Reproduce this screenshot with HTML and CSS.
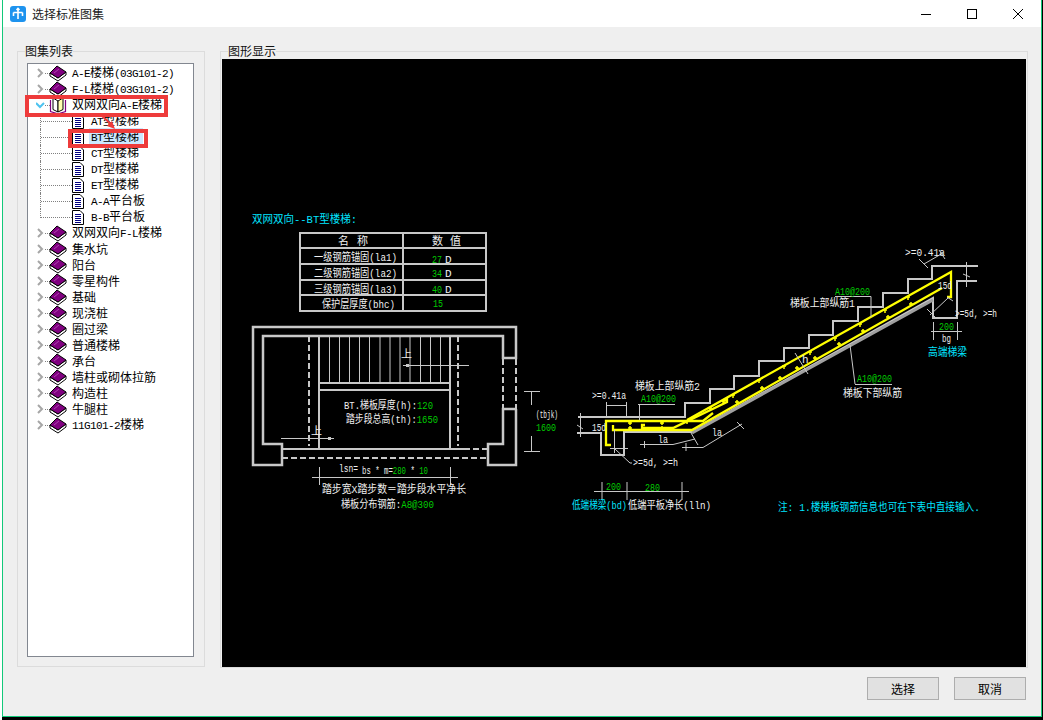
FILE: index.html
```html
<!DOCTYPE html>
<html lang="zh-CN">

<head>
    <meta charset="UTF-8">
    <meta name="viewport" content="width=device-width, initial-scale=1.0">
    <title>选择标准图集</title>
    <link rel="stylesheet" href="styles.css">
</head>

<body>
    <svg class="defs" width="0" height="0">
        <symbol id="book" viewBox="0 0 18 17">
            <path d="M1 8 L1 11 L9 16 L17 10 L17 7 L9 13 Z" fill="#fff" stroke="#000" stroke-width="1" />
            <path d="M1 8 L8 1 L17 7 L9 13 Z" fill="#800080" stroke="#000" stroke-width="1" />
            <path d="M5 8 L10 4" stroke="#b040b0" stroke-width="1" />
        </symbol>
        <symbol id="open-book" viewBox="0 0 18 17">
            <path d="M1.5 3 V14.5 L8 16.5 H10 L16.5 14.5 V3" fill="none" stroke="#800080" stroke-width="1.2" />
            <path d="M4 1 L9 4 V15 L4 12.5 Z" fill="#fff" stroke="#000" stroke-width="1" />
            <path d="M14 1 L9 4 V15 L14 12.5 Z" fill="#ffffb0" stroke="#000" stroke-width="1" />
        </symbol>
        <symbol id="doc" viewBox="0 0 12 15">
            <path d="M.5 .5 H8 L11.5 4 V14.5 H.5 Z" fill="#fff" stroke="#000" />
            <path d="M3 4.5 H9 M3 6.5 H9 M3 8.5 H9 M3 10.5 H9 M3 12.5 H9" stroke="#000080" />
        </symbol>
    </svg>

    <div class="window">
        <div class="titlebar">
            <svg class="app-icon" viewBox="0 0 16 16">
                <rect width="16" height="16" rx="3" fill="#1e93ee" />
                <path d="M8 2.5 V13 M3.5 6.5 H12.5 M3.5 6.5 V10 M12.5 6.5 V10 M6.5 4 L8 2.5 L9.5 4" fill="none" stroke="#fff" stroke-width="1.6" />
            </svg>
            <span class="title">选择标准图集</span>
            <div class="controls">
                <div class="control"><svg width="10" height="10" viewBox="0 0 10 10"><path d="M0 5.5 H10" stroke="#000" /></svg></div>
                <div class="control"><svg width="10" height="10" viewBox="0 0 10 10"><rect x=".5" y=".5" width="9" height="9" fill="none" stroke="#000" /></svg></div>
                <div class="control"><svg width="10" height="10" viewBox="0 0 10 10"><path d="M0 0 L10 10 M10 0 L0 10" stroke="#000" /></svg></div>
            </div>
        </div>

        <div class="panels">
            <fieldset class="group group-list">
                <legend>图集列表</legend>
                <div class="tree">
                    <div class="row"><svg class="chev"><path d="M2 1 L6 5 L2 9" /></svg><i class="dots"></i><svg class="icon"><use href="#book" /></svg><span><b>A-E</b>楼梯<b>(03G101-2)</b></span></div>
                    <div class="row"><svg class="chev"><path d="M2 1 L6 5 L2 9" /></svg><i class="dots"></i><svg class="icon"><use href="#book" /></svg><span><b>F-L</b>楼梯<b>(03G101-2)</b></span></div>
                    <div class="row"><svg class="chev open"><path d="M0 3 L4 7 L8 3" /></svg><i class="dots"></i><svg class="icon"><use href="#open-book" /></svg><span>双网双向<b>A-E</b>楼梯</span></div>
                    <div class="kids">
                        <div class="kid"><i class="tick"></i><svg class="doc"><use href="#doc" /></svg><span class="kid-label"><b>AT</b>型楼梯</span></div>
                        <div class="kid selected"><i class="tick"></i><svg class="doc"><use href="#doc" /></svg><span class="kid-label"><b>BT</b>型楼梯</span></div>
                        <div class="kid"><i class="tick"></i><svg class="doc"><use href="#doc" /></svg><span class="kid-label"><b>CT</b>型楼梯</span></div>
                        <div class="kid"><i class="tick"></i><svg class="doc"><use href="#doc" /></svg><span class="kid-label"><b>DT</b>型楼梯</span></div>
                        <div class="kid"><i class="tick"></i><svg class="doc"><use href="#doc" /></svg><span class="kid-label"><b>ET</b>型楼梯</span></div>
                        <div class="kid"><i class="tick"></i><svg class="doc"><use href="#doc" /></svg><span class="kid-label"><b>A-A</b>平台板</span></div>
                        <div class="kid"><i class="tick"></i><svg class="doc"><use href="#doc" /></svg><span class="kid-label"><b>B-B</b>平台板</span></div>
                    </div>
                    <div class="row"><svg class="chev"><path d="M2 1 L6 5 L2 9" /></svg><i class="dots"></i><svg class="icon"><use href="#book" /></svg><span>双网双向<b>F-L</b>楼梯</span></div>
                    <div class="row"><svg class="chev"><path d="M2 1 L6 5 L2 9" /></svg><i class="dots"></i><svg class="icon"><use href="#book" /></svg><span>集水坑</span></div>
                    <div class="row"><svg class="chev"><path d="M2 1 L6 5 L2 9" /></svg><i class="dots"></i><svg class="icon"><use href="#book" /></svg><span>阳台</span></div>
                    <div class="row"><svg class="chev"><path d="M2 1 L6 5 L2 9" /></svg><i class="dots"></i><svg class="icon"><use href="#book" /></svg><span>零星构件</span></div>
                    <div class="row"><svg class="chev"><path d="M2 1 L6 5 L2 9" /></svg><i class="dots"></i><svg class="icon"><use href="#book" /></svg><span>基础</span></div>
                    <div class="row"><svg class="chev"><path d="M2 1 L6 5 L2 9" /></svg><i class="dots"></i><svg class="icon"><use href="#book" /></svg><span>现浇桩</span></div>
                    <div class="row"><svg class="chev"><path d="M2 1 L6 5 L2 9" /></svg><i class="dots"></i><svg class="icon"><use href="#book" /></svg><span>圈过梁</span></div>
                    <div class="row"><svg class="chev"><path d="M2 1 L6 5 L2 9" /></svg><i class="dots"></i><svg class="icon"><use href="#book" /></svg><span>普通楼梯</span></div>
                    <div class="row"><svg class="chev"><path d="M2 1 L6 5 L2 9" /></svg><i class="dots"></i><svg class="icon"><use href="#book" /></svg><span>承台</span></div>
                    <div class="row"><svg class="chev"><path d="M2 1 L6 5 L2 9" /></svg><i class="dots"></i><svg class="icon"><use href="#book" /></svg><span>墙柱或砌体拉筋</span></div>
                    <div class="row"><svg class="chev"><path d="M2 1 L6 5 L2 9" /></svg><i class="dots"></i><svg class="icon"><use href="#book" /></svg><span>构造柱</span></div>
                    <div class="row"><svg class="chev"><path d="M2 1 L6 5 L2 9" /></svg><i class="dots"></i><svg class="icon"><use href="#book" /></svg><span>牛腿柱</span></div>
                    <div class="row"><svg class="chev"><path d="M2 1 L6 5 L2 9" /></svg><i class="dots"></i><svg class="icon"><use href="#book" /></svg><span><b>11G101-2</b>楼梯</span></div>
                </div>
            </fieldset>

            <fieldset class="group group-view">
                <legend>图形显示</legend>
                <svg class="drawing" viewBox="222 59 804 608" width="804" height="608">
                    <!-- heading and table -->
                    <text class="cad cyan" x="252" y="223" textLength="105" lengthAdjust="spacingAndGlyphs">双网双向--BT型楼梯:</text>
                    <path class="wall-thin" d="M300 233 H486 V311 H300 Z M403 233 V311 M300 248 H486 M300 264 H486 M300 280 H486 M300 295 H486" />
                    <text class="cad" x="338" y="245" textLength="30">名 称</text>
                    <text class="cad" x="432" y="245" textLength="29">数 值</text>
                    <text class="cad" x="314" y="261" textLength="83" lengthAdjust="spacingAndGlyphs">一级钢筋锚固(la1)</text>
                    <text class="cad" x="314" y="277" textLength="83" lengthAdjust="spacingAndGlyphs">二级钢筋锚固(la2)</text>
                    <text class="cad" x="314" y="293" textLength="83" lengthAdjust="spacingAndGlyphs">三级钢筋锚固(la3)</text>
                    <text class="cad" x="322" y="308" textLength="73" lengthAdjust="spacingAndGlyphs">保护层厚度(bhc)</text>
                    <text class="cad green" x="432" y="263" textLength="10" lengthAdjust="spacingAndGlyphs">27</text><text class="cad" x="445" y="263">D</text>
                    <text class="cad green" x="432" y="277" textLength="10" lengthAdjust="spacingAndGlyphs">34</text><text class="cad" x="445" y="277">D</text>
                    <text class="cad green" x="432" y="293" textLength="10" lengthAdjust="spacingAndGlyphs">40</text><text class="cad" x="445" y="293">D</text>
                    <text class="cad green" x="433" y="307" textLength="10" lengthAdjust="spacingAndGlyphs">15</text>

                    <!-- plan view -->
                    <path class="wall" d="M282 449 V465 H253 V327 H516 V358 H503 V336 H263 V444 H282 V449 M516 409 V465 H488 V444 H503 V409 H516" />
                    <path class="wall-thin" d="M319 336 V449 M450 336 V449 M282 449 H464 M319 383 H450 M319 390 H450" />
                    <path class="wall-dash" d="M309 336 V446 M458 336 V446 M503 359 V409 M516 359 V409 M464 449 H488 M282 458 H488" />
                    <path class="line" d="M329.5 337 V383 M339.5 337 V383 M349.5 337 V383 M359.5 337 V383 M369.5 337 V383 M380 337 V383 M390 337 V383 M400 337 V383 M410 337 V383 M420.5 337 V383 M430.5 337 V383 M440.5 337 V383" />
                    <path class="line" d="M403 365.5 H469 M281 438.5 H334 M312 477.5 H458 M319.5 467 V485 M450.5 467 V485 M524 391.5 H540 M524 451.5 H540 M531.5 391 V405 M531.5 436 V451" />
                    <rect class="dot" x="406" y="364" width="3" height="3" />
                    <rect class="dot" x="328" y="437" width="3" height="3" />
                    <text class="cad" x="401" y="358">上</text>
                    <text class="cad" x="311" y="435">上</text>
                    <text class="cad" x="344" y="409" textLength="89" lengthAdjust="spacingAndGlyphs">BT.梯板厚度(h):<tspan class="green">120</tspan></text>
                    <text class="cad" x="346" y="423" textLength="92" lengthAdjust="spacingAndGlyphs">踏步段总高(th):<tspan class="green">1650</tspan></text>
                    <text class="cad" x="536" y="418" textLength="22" lengthAdjust="spacingAndGlyphs">(tbjk)</text>
                    <text class="cad green" x="536" y="431" textLength="20" lengthAdjust="spacingAndGlyphs">1600</text>
                    <text class="cad" x="339" y="472" textLength="19" lengthAdjust="spacingAndGlyphs">lsn=</text>
                    <text class="cad" x="362" y="474" textLength="66" lengthAdjust="spacingAndGlyphs">bs * m=<tspan class="green">280</tspan> * <tspan class="green">10</tspan></text>
                    <text class="cad" x="322" y="493" textLength="144" lengthAdjust="spacingAndGlyphs">踏步宽X踏步数＝踏步段水平净长</text>
                    <text class="cad" x="341" y="508" textLength="93" lengthAdjust="spacingAndGlyphs">梯板分布钢筋:<tspan class="green">A8@300</tspan></text>

                    <!-- stair section -->
                    <path class="wall-thin" d="M578 417 H685 V403 H710 V389 H734 V376 H759 V361 H784 V348 H809 V335 H833 V321 H858 V307 H883 V293 H908 V279 H932 V266 H978" />
                    <path class="wall-thin" d="M577 433 H601 V455 H624 V432 H692 L933 298 V318 H957 V281 H977" />
                    <path class="slab" d="M692 433 L933 300" />
                    <path class="rebar" d="M611 445 H606 V421 H703 L713 413" />
                    <path class="rebar" d="M613 425 V430 H692 L942 288" />
                    <path class="rebar" d="M687 420 L951 272 V297 H947" />
                    <path class="rebar" d="M645 425 H642 V428 H673 L727 402 V399 L722 402" />
                    <path class="tie" d="M685 421 h4 M687 420 v4 M708 408 h4 M710 407 v4 M731 395 h4 M733 394 v4 M757 380 h4 M759 379 v4 M782 366 h4 M784 365 v4 M808 352 h4 M810 351 v4 M833 338 h4 M835 337 v4 M858 324 h4 M860 323 v4 M883 310 h4 M885 309 v4 M906 297 h4 M908 296 v4" />
                    <path class="tie" d="M735 402 h4 M737 400 v4 M760 388 h4 M762 386 v4 M778 378 h4 M780 376 v4 M795 368 h4 M797 366 v4 M813 358 h4 M815 356 v4 M837 344 h4 M839 342 v4 M861 331 h4 M863 329 v4 M886 317 h4 M888 315 v4 M909 304 h4 M911 302 v4 M628 423 h4 M630 421 v4 M660 423 h4 M662 421 v4 M628 428 h4 M630 426 v4 M660 428 h4 M662 426 v4" />
                    <path class="line" d="M606 405.5 H626 M606.5 402 V417 M626.5 402 V417 M580.5 413 V437 M577 425 L583 429 M639.5 404 V420 M638 404.5 H675 M610 448.5 H628 M614.5 430 V453 M615 449 L630 463 H632" />
                    <path class="line" d="M640 444.5 H673 L695 439 M644.5 441 V448 M691 433 L698 445 M682 447.5 H703 L742 424 M686 443 V451 M737 422 L744 429" />
                    <path class="line" d="M795 353 L808 374 M594 491.5 H689 M602 482 V500 M627 482 V500 M682 482 V500" />
                    <path class="line" d="M924 264 L943 253 M919 259 L928 268 M939 250 L945 259 M966.5 262 V287 M963 274 L970 277 M948 298 L930 315 M927 309 L936 318 M953 301 L947 297" />
                    <path class="line" d="M931 331.5 H962 M933.5 322 V340 M957.5 322 V340 M835 296.5 H871 V317 M855 384.5 H892 M855 384 L850 345" />
                    <text class="cad" x="905" y="256" textLength="40" lengthAdjust="spacingAndGlyphs">&gt;=0.41a</text>
                    <text class="cad" x="938" y="289" textLength="14" lengthAdjust="spacingAndGlyphs">15d</text>
                    <text class="cad" x="955" y="317" textLength="42" lengthAdjust="spacingAndGlyphs">&gt;=5d, &gt;=h</text>
                    <text class="cad green" x="939" y="330" textLength="15" lengthAdjust="spacingAndGlyphs">200</text>
                    <text class="cad" x="942" y="342" textLength="9" lengthAdjust="spacingAndGlyphs">bg</text>
                    <text class="cad cyan" x="928" y="356" textLength="39" lengthAdjust="spacingAndGlyphs">高端梯梁</text>
                    <text class="cad green" x="835" y="295" textLength="35" lengthAdjust="spacingAndGlyphs">A10@200</text>
                    <text class="cad" x="790" y="307" textLength="65" lengthAdjust="spacingAndGlyphs">梯板上部纵筋1</text>
                    <text class="cad green" x="857" y="382" textLength="35" lengthAdjust="spacingAndGlyphs">A10@200</text>
                    <text class="cad" x="843" y="397" textLength="59" lengthAdjust="spacingAndGlyphs">梯板下部纵筋</text>
                    <text class="cad" x="802" y="363">h</text>
                    <text class="cad" x="635" y="390" textLength="65" lengthAdjust="spacingAndGlyphs">梯板上部纵筋2</text>
                    <text class="cad" x="592" y="399" textLength="34" lengthAdjust="spacingAndGlyphs">&gt;=0.41a</text>
                    <text class="cad green" x="641" y="402" textLength="35" lengthAdjust="spacingAndGlyphs">A10@200</text>
                    <text class="cad" x="592" y="431" textLength="14" lengthAdjust="spacingAndGlyphs">15d</text>
                    <text class="cad" x="633" y="466" textLength="45" lengthAdjust="spacingAndGlyphs">&gt;=5d, &gt;=h</text>
                    <text class="cad" x="658" y="443" textLength="10" lengthAdjust="spacingAndGlyphs">la</text>
                    <text class="cad" x="712" y="436" textLength="10" lengthAdjust="spacingAndGlyphs">la</text>
                    <text class="cad green" x="606" y="490" textLength="15" lengthAdjust="spacingAndGlyphs">200</text>
                    <text class="cad green" x="645" y="491" textLength="15" lengthAdjust="spacingAndGlyphs">280</text>
                    <text class="cad cyan" x="572" y="509" textLength="55" lengthAdjust="spacingAndGlyphs">低端梯梁(bd)</text>
                    <text class="cad" x="628" y="509" textLength="83" lengthAdjust="spacingAndGlyphs">低端平板净长(lln)</text>
                    <text class="cad cyan" x="778" y="511" textLength="202" lengthAdjust="spacingAndGlyphs">注: 1.楼梯板钢筋信息也可在下表中直接输入.</text>
                </svg>
            </fieldset>
        </div>

        <div class="footer">
            <button class="btn">选择</button>
            <button class="btn">取消</button>
        </div>

        <!-- red annotations over the tree -->
        <div class="mark mark-parent"></div>
        <div class="mark mark-child"></div>
        <svg class="mark-arrow" viewBox="0 0 16 14" width="16" height="14">
            <path d="M1 0 L11 9" stroke="#ee3b3b" stroke-width="2" />
            <path d="M14 13 L6 10 L11 5 Z" fill="#ee3b3b" />
        </svg>
    </div>
</body>

</html>
```

FILE: styles.css
```css
html,
body {
    margin: 0;
    height: 720px;
}

body {
    box-sizing: border-box;
    border-left: 2px solid #fff;
    background-color: #000;
    overflow: hidden;
    font-family: "Noto Sans CJK SC", sans-serif;
    font-size: 12px;
}

.defs {
    position: absolute;
}

.window {
    position: relative;
    box-sizing: border-box;
    width: 1040px;
    height: 717px;
    border: 1px solid #12c97a;
    border-top: 0;
    background-color: #efefef;
}

.titlebar {
    display: flex;
    align-items: center;
    height: 27px;
    padding-left: 7px;
    background-color: #fff;
}

.app-icon {
    width: 16px;
    height: 16px;
    margin-right: 6px;
}

.title {
    color: #222;
}

.controls {
    display: flex;
    margin-left: auto;
}

.control {
    display: flex;
    align-items: center;
    justify-content: center;
    width: 46px;
    height: 22px;
}

.panels {
    display: flex;
    align-items: flex-start;
    gap: 15px;
    padding: 17px 0 0 14px;
}

.group {
    box-sizing: border-box;
    min-width: 0;
    margin: 0;
    border: 1px solid #dcdcdc;
}

.group legend {
    padding: 0;
    height: 14px;
    line-height: 14px;
    color: #111;
}

.group-list {
    width: 188px;
    height: 623px;
    padding: 5px 10px 0 9px;
}

.group-list legend {
    margin-left: -2px;
}

.group-view {
    width: 808px;
    height: 624px;
    padding: 1px;
}

.group-view legend {
    margin-left: 6px;
}

.drawing {
    display: block;
    background-color: #000;
}

/* tree */
.tree {
    box-sizing: border-box;
    height: 594px;
    padding-top: 1px;
    border: 1px solid #828790;
    background-color: #fff;
    line-height: 16px;
    white-space: nowrap;
    color: #000;
}

.tree b {
    font-family: "Liberation Mono", monospace;
    font-size: 11px;
    font-weight: normal;
    letter-spacing: -0.6px;
}

.row {
    display: flex;
    align-items: center;
    height: 16px;
    padding-left: 8px;
}

.chev {
    width: 9px;
    height: 10px;
    flex: none;
}

.chev path {
    fill: none;
    stroke: #a6a6a6;
    stroke-width: 2;
}

.chev.open path {
    stroke: #4dc3f0;
}

.dots {
    width: 5px;
    flex: none;
    border-top: 1px dotted #808080;
}

.icon {
    width: 18px;
    height: 17px;
    flex: none;
    margin-left: -1px;
    margin-right: 5px;
}

.kids {
    margin-left: 12px;
}

.kid {
    display: flex;
    align-items: center;
    height: 16px;
    border-left: 1px dotted #808080;
}

.kid:last-child {
    border-left-color: transparent;
}

.tick {
    flex: none;
    align-self: flex-start;
    box-sizing: border-box;
    width: 31px;
    height: 9px;
    border-bottom: 1px dotted #808080;
}

.kid:last-child .tick {
    margin-left: -1px;
    width: 32px;
    border-left: 1px dotted #808080;
}

.doc {
    flex: none;
    width: 12px;
    height: 15px;
    margin-right: 5px;
}

.kid-label {
    display: block;
    padding: 0 4px 0 2px;
}

.selected .kid-label {
    background-color: #cce8ff;
}

/* drawing */
.cad {
    font-family: "Liberation Mono", "Noto Sans CJK SC", monospace;
    font-size: 11px;
    fill: #f0f0f0;
}

.green {
    fill: #00cc00;
}

.cyan {
    fill: #00e5ff;
}

.line,
.wall,
.wall-thin,
.wall-dash,
.slab,
.rebar,
.tie {
    fill: none;
}

.line {
    stroke: #c8c8c8;
    stroke-width: 1;
}

.wall {
    stroke: #c8c8c8;
    stroke-width: 2.5;
}

.wall-thin {
    stroke: #c8c8c8;
    stroke-width: 2;
}

.wall-dash {
    stroke: #c8c8c8;
    stroke-width: 2;
    stroke-dasharray: 6 3;
}

.slab {
    stroke: #a0a0a0;
    stroke-width: 3;
}

.rebar {
    stroke: #ffff00;
    stroke-width: 2.3;
}

.tie {
    stroke: #ffff00;
    stroke-width: 1.5;
}

.dot {
    fill: #c8c8c8;
}

/* buttons */
.footer {
    display: flex;
    justify-content: flex-end;
    gap: 15px;
    padding-right: 15px;
    margin-top: 9px;
}

.btn {
    box-sizing: border-box;
    width: 72px;
    height: 23px;
    padding: 0;
    border: 1px solid #adadad;
    background-color: #e1e1e1;
    font-family: "Noto Sans CJK SC", sans-serif;
    font-size: 12px;
    color: #000;
}

/* annotations */
.mark {
    position: absolute;
    box-sizing: border-box;
    border: 4px solid #ee3b3b;
}

.mark-parent {
    left: 22px;
    top: 95px;
    width: 143px;
    height: 22px;
}

.mark-child {
    left: 65px;
    top: 129px;
    width: 80px;
    height: 19px;
}

.mark-arrow {
    position: absolute;
    left: 98px;
    top: 116px;
}
```
